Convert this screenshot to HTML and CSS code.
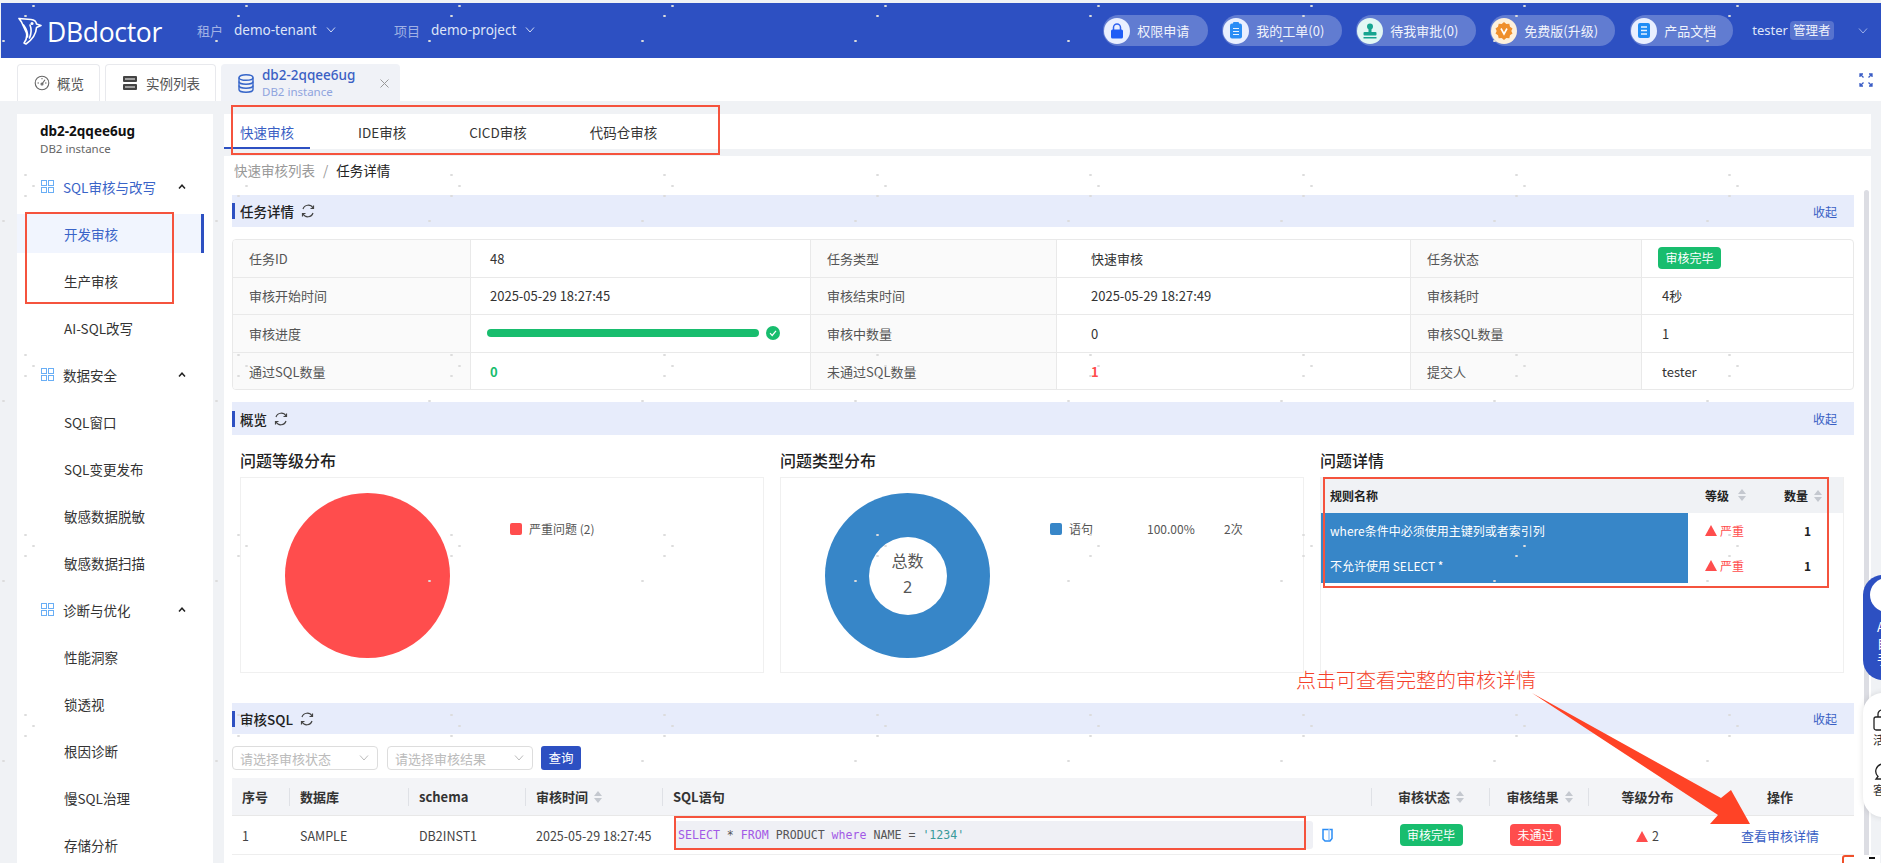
FILE: index.html
```html
<!DOCTYPE html>
<html lang="zh-CN">
<head>
<meta charset="utf-8">
<title>DBdoctor</title>
<link rel="stylesheet" href="styles.css">
</head>
<body>
<header class="topbar">
  <div class="logo">
    <svg class="logo-mark" width="24" height="28" viewBox="0 0 24 28" fill="none" stroke="#fff" stroke-width="1.6" stroke-linejoin="round" stroke-linecap="round"><path d="M1 1.5 L13 2.5 Q18 3 18.5 7 L23 8.5 L18.5 10.5 Q18 20 8 27 L6 26 Q9.5 22 8.5 16 L3.5 5 Z"/><path d="M5.5 8 Q10 14 9.5 20"/><path d="M12 8 Q14.5 14 11.5 21"/><circle cx="14" cy="6.5" r=".8"/></svg>
    <span class="logo-text">DBdoctor</span>
  </div>
  <div class="scope scope-tenant"><span class="scope-label">租户</span><span>demo-tenant</span><svg class="chev" width="10" height="6" viewBox="0 0 10 6" fill="none" stroke="#cfd8f5" stroke-width="1"><path d="M1 .5 5 5 9 .5"/></svg></div>
  <div class="scope scope-project"><span class="scope-label">项目</span><span>demo-project</span><svg class="chev" width="10" height="6" viewBox="0 0 10 6" fill="none" stroke="#cfd8f5" stroke-width="1"><path d="M1 .5 5 5 9 .5"/></svg></div>
  <div class="top-actions">
    <div class="pill pill-a"><span class="pill-ic"><svg width="14" height="16" viewBox="0 0 14 16"><path d="M3.5 7V4.5a3.5 3.5 0 0 1 7 0V7" fill="none" stroke="#2f62f0" stroke-width="1.5"/><rect x="1" y="6.5" width="12" height="9" rx="1.5" fill="#1f5cf5"/></svg></span>权限申请</div>
    <div class="pill pill-b"><span class="pill-ic"><svg width="14" height="17" viewBox="0 0 14 17"><rect x="1" y="1.5" width="12" height="15" rx="2" fill="#2b8df5"/><rect x="4" y="0" width="6" height="3" rx="1" fill="#2b8df5"/><path d="M4 6.5h6M4 9.5h6M4 12.5h6" stroke="#e8f2ff" stroke-width="1.2"/></svg></span>我的工单(0)</div>
    <div class="pill pill-c"><span class="pill-ic pill-ic-teal"><svg width="16" height="16" viewBox="0 0 16 16"><circle cx="8" cy="3.5" r="3" fill="#17a590"/><path d="M6.5 5.5h3v4h-3z" fill="#17a590"/><rect x="1.5" y="9" width="13" height="3.5" rx="1" fill="#17a590"/><rect x="1.5" y="14" width="13" height="1.5" fill="#17a590"/></svg></span>待我审批(0)</div>
    <div class="pill pill-d"><span class="pill-ic pill-ic-gold"><svg width="18" height="18" viewBox="0 0 18 18"><path d="M9 0l2.3 2 3-.3.7 3 2.5 1.8L16.3 9l1.2 2.5-2.5 1.8-.7 3-3-.3L9 18l-2.3-2-3 .3-.7-3L.5 11.5 1.7 9 .5 6.5 3 4.700l.7-3 3 .3z" fill="#ef8f2c"/><path d="M6 6.500 9 12l3-5.500" fill="none" stroke="#fff" stroke-width="1.600"/></svg></span>免费版(升级)</div>
    <div class="pill pill-e"><span class="pill-ic"><svg width="14" height="17" viewBox="0 0 14 17"><rect x="1" y="1" width="12" height="15" rx="2" fill="#1f8cf5"/><path d="M4 5h6M4 8.500h6M4 12h6" stroke="#e8f2ff" stroke-width="1.300"/></svg></span>产品文档</div>
    <div class="user"><span>tester</span><span class="role">管理者</span></div>
    <svg class="user-chev" width="10" height="6" viewBox="0 0 10 6" fill="none" stroke="#9db0e8" stroke-width="1"><path d="M1 .5 5 5 9 .5"/></svg>
  </div>
</header>

<nav class="tabbar">
  <div class="wtab wtab-home"><svg width="16" height="16" viewBox="0 0 16 16" fill="none" stroke="#666" stroke-width="1.100"><circle cx="8" cy="8" r="6.800"/><path d="M8 9 11 4.800"/><path d="M3.500 8h1.500M11 8h1.500M8 3v1.300"/><circle cx="8" cy="9" r="1"/></svg>概览</div>
  <div class="wtab wtab-list"><svg width="16" height="16" viewBox="0 0 16 16"><rect x="1" y="1" width="14" height="6" rx="1" fill="#444"/><rect x="1" y="9" width="14" height="6" rx="1" fill="#444"/><path d="M3 4h10M3 12h10" stroke="#fff" stroke-width="1"/></svg>实例列表</div>
  <div class="wtab wtab-active">
    <svg width="16" height="19" viewBox="0 0 16 19" fill="none" stroke="#3565c9" stroke-width="1.400"><ellipse cx="8" cy="3.500" rx="7" ry="2.800"/><path d="M1 3.500v12c0 1.500 3 2.800 7 2.800s7-1.300 7-2.800v-12"/><path d="M1 7.500c0 1.500 3 2.800 7 2.800s7-1.300 7-2.800M1 11.500c0 1.500 3 2.800 7 2.800s7-1.300 7-2.800"/></svg>
    <div class="wtab-txt"><div class="wtab-title">db2-2qqee6ug</div><div class="wtab-sub">DB2 instance</div></div>
    <svg class="wtab-x" width="9" height="9" viewBox="0 0 9 9" stroke="#999" stroke-width="1"><path d="M.5.500l8 8M8.500.500l-8 8"/></svg>
  </div>
  <svg class="fullscreen" width="14" height="14" viewBox="0 0 14 14" fill="none" stroke="#3a5cc5" stroke-width="1.300"><path d="M1 4V1h3M1 1l3.500 3.500M13 4V1h-3M13 1 9.500 4.500M1 10v3h3M1 13l3.500-3.500M13 10v3h-3M13 13 9.500 9.500"/></svg>
</nav>

<main class="main">
  <aside class="sidebar">
    <div class="side-head"><div class="side-name">db2-2qqee6ug</div><div class="side-sub">DB2 instance</div></div>
    <div class="side-list">
      <div class="side-group side-group-active"><svg class="gi" width="13" height="13" viewBox="0 0 13 13" fill="none" stroke="#69aef5"><rect x=".5" y=".5" width="5" height="5"/><rect x="7.500" y=".5" width="5" height="5"/><rect x=".5" y="7.500" width="5" height="5"/><rect x="7.500" y="7.500" width="5" height="5"/></svg><span>SQL审核与改写</span><svg class="up" width="8" height="5" viewBox="0 0 8 5" fill="none" stroke="#222" stroke-width="1.500"><path d="M1 4.500 4 1.200l3 3.300"/></svg></div>
      <div class="side-item side-item-active">开发审核</div>
      <div class="side-item">生产审核</div>
      <div class="side-item">AI-SQL改写</div>
      <div class="side-group"><svg class="gi" width="13" height="13" viewBox="0 0 13 13" fill="none" stroke="#69aef5"><rect x=".5" y=".5" width="5" height="5"/><rect x="7.500" y=".5" width="5" height="5"/><rect x=".5" y="7.500" width="5" height="5"/><rect x="7.500" y="7.500" width="5" height="5"/></svg><span>数据安全</span><svg class="up" width="8" height="5" viewBox="0 0 8 5" fill="none" stroke="#222" stroke-width="1.500"><path d="M1 4.500 4 1.200l3 3.300"/></svg></div>
      <div class="side-item">SQL窗口</div>
      <div class="side-item">SQL变更发布</div>
      <div class="side-item">敏感数据脱敏</div>
      <div class="side-item">敏感数据扫描</div>
      <div class="side-group"><svg class="gi" width="13" height="13" viewBox="0 0 13 13" fill="none" stroke="#69aef5"><rect x=".5" y=".5" width="5" height="5"/><rect x="7.500" y=".5" width="5" height="5"/><rect x=".5" y="7.500" width="5" height="5"/><rect x="7.500" y="7.500" width="5" height="5"/></svg><span>诊断与优化</span><svg class="up" width="8" height="5" viewBox="0 0 8 5" fill="none" stroke="#222" stroke-width="1.500"><path d="M1 4.500 4 1.200l3 3.300"/></svg></div>
      <div class="side-item">性能洞察</div>
      <div class="side-item">锁透视</div>
      <div class="side-item">根因诊断</div>
      <div class="side-item">慢SQL治理</div>
      <div class="side-item">存储分析</div>
    </div>
  </aside>

  <div class="content">
    <div class="ctabs">
      <div class="ctab ctab-active">快速审核</div>
      <div class="ctab">IDE审核</div>
      <div class="ctab">CICD审核</div>
      <div class="ctab">代码仓审核</div>
    </div>
    <section class="panel">
      <div class="crumbs"><span class="crumb-dim">快速审核列表</span><span class="crumb-sep">/</span><span>任务详情</span></div>

      <div class="bar"><span class="bar-title">任务详情</span><svg class="refresh" width="14" height="14" viewBox="0 0 14 14" fill="none" stroke="#444" stroke-width="1.200"><path d="M2 5a5.500 5.500 0 0 1 10-1M12 9a5.500 5.500 0 0 1-10 1"/><path d="M12.500 1.500V4.500H9.500M1.500 12.500V9.500H4.500"/></svg><span class="bar-link">收起</span></div>

      <div class="desc">
        <div class="dl">任务ID</div><div class="dv">48</div><div class="dl">任务类型</div><div class="dv">快速审核</div><div class="dl">任务状态</div><div class="dv"><span class="tag tag-green tag-status">审核完毕</span></div>
        <div class="dl">审核开始时间</div><div class="dv">2025-05-29 18:27:45</div><div class="dl">审核结束时间</div><div class="dv">2025-05-29 18:27:49</div><div class="dl">审核耗时</div><div class="dv">4秒</div>
        <div class="dl">审核进度</div><div class="dv dv-progress"><span class="progress"></span><svg width="14" height="14" viewBox="0 0 14 14"><circle cx="7" cy="7" r="7" fill="#18bd6e"/><path d="M4 7.200 6.200 9.500 10 4.800" fill="none" stroke="#fff" stroke-width="1.200"/></svg></div><div class="dl">审核中数量</div><div class="dv">0</div><div class="dl">审核SQL数量</div><div class="dv">1</div>
        <div class="dl">通过SQL数量</div><div class="dv num-green">0</div><div class="dl">未通过SQL数量</div><div class="dv num-red">1</div><div class="dl">提交人</div><div class="dv">tester</div>
      </div>

      <div class="bar bar-2"><span class="bar-title">概览</span><svg class="refresh" width="14" height="14" viewBox="0 0 14 14" fill="none" stroke="#444" stroke-width="1.200"><path d="M2 5a5.500 5.500 0 0 1 10-1M12 9a5.500 5.500 0 0 1-10 1"/><path d="M12.500 1.500V4.500H9.500M1.500 12.500V9.500H4.500"/></svg><span class="bar-link">收起</span></div>

      <div class="charts">
        <div class="chart-col">
          <h3 class="chart-title">问题等级分布</h3>
          <div class="card card-pie">
            <div class="pie"></div>
            <div class="legend"><i class="sw sw-red"></i><span>严重问题 (2)</span></div>
          </div>
        </div>
        <div class="chart-col">
          <h3 class="chart-title">问题类型分布</h3>
          <div class="card card-donut">
            <div class="donut"><div class="donut-hole"><span class="donut-lbl">总数</span><span class="donut-num">2</span></div></div>
            <div class="legend legend-type"><i class="sw sw-blue"></i><span class="lg-name">语句</span><span class="lg-pct">100.00%</span><span>2次</span></div>
          </div>
        </div>
        <div class="chart-col">
          <h3 class="chart-title">问题详情</h3>
          <div class="card card-rules">
            <div class="rule-row rule-head"><div class="rule-name">规则名称</div><div class="rule-lv">等级<svg class="sort" width="8" height="12" viewBox="0 0 8 12" fill="#c4c8cf"><path d="M4 0 8 5H0zM4 12 0 7h8z"/></svg></div><div>数量<svg class="sort" width="8" height="12" viewBox="0 0 8 12" fill="#c4c8cf"><path d="M4 0 8 5H0zM4 12 0 7h8z"/></svg></div></div>
            <div class="rule-row"><div class="rule-name rule-sel">where条件中必须使用主键列或者索引列</div><div class="rule-lv rule-sev"><svg width="12" height="11" viewBox="0 0 12 11" fill="#ff4d4d"><path d="M6 0 12 11H0z"/></svg>严重</div><div class="rule-qty">1</div></div>
            <div class="rule-row"><div class="rule-name rule-sel">不允许使用 SELECT *</div><div class="rule-lv rule-sev"><svg width="12" height="11" viewBox="0 0 12 11" fill="#ff4d4d"><path d="M6 0 12 11H0z"/></svg>严重</div><div class="rule-qty">1</div></div>
          </div>
        </div>
      </div>

      <div class="bar bar-3"><span class="bar-title">审核SQL</span><svg class="refresh" width="14" height="14" viewBox="0 0 14 14" fill="none" stroke="#444" stroke-width="1.200"><path d="M2 5a5.500 5.500 0 0 1 10-1M12 9a5.500 5.500 0 0 1-10 1"/><path d="M12.500 1.500V4.500H9.500M1.500 12.500V9.500H4.500"/></svg><span class="bar-link">收起</span></div>

      <div class="filters">
        <div class="select">请选择审核状态<svg width="10" height="6" viewBox="0 0 10 6" fill="none" stroke="#bbb"><path d="M1 .5 5 5 9 .5"/></svg></div>
        <div class="select">请选择审核结果<svg width="10" height="6" viewBox="0 0 10 6" fill="none" stroke="#bbb"><path d="M1 .5 5 5 9 .5"/></svg></div>
        <div class="btn">查询</div>
      </div>

      <div class="sql-table">
        <div class="sql-row sql-head">
          <div class="th th-line">序号</div><div class="th th-line">数据库</div><div class="th th-line">schema</div><div class="th th-line">审核时间<svg class="sort" width="8" height="12" viewBox="0 0 8 12" fill="#c4c8cf"><path d="M4 0 8 5H0zM4 12 0 7h8z"/></svg></div><div class="th th-line">SQL语句</div>
          <div class="th th-c th-line">审核状态<svg class="sort" width="8" height="12" viewBox="0 0 8 12" fill="#c4c8cf"><path d="M4 0 8 5H0zM4 12 0 7h8z"/></svg></div><div class="th th-c th-line">审核结果<svg class="sort" width="8" height="12" viewBox="0 0 8 12" fill="#c4c8cf"><path d="M4 0 8 5H0zM4 12 0 7h8z"/></svg></div><div class="th th-c">等级分布</div><div class="th th-c">操作</div>
        </div>
        <div class="sql-row sql-body">
          <div class="td">1</div><div class="td">SAMPLE</div><div class="td">DB2INST1</div><div class="td">2025-05-29 18:27:45</div>
          <div class="td td-code"><code class="code"><b>SELECT</b> * <b>FROM</b> <span class="id">PRODUCT</span> <b>where</b> <span class="id">NAME</span> = <em>'1234'</em></code><svg class="copy" width="11" height="14" viewBox="0 0 11 14" fill="none" stroke="#2b8df5" stroke-width="1.500"><path d="M1 1.500h9v9l-2 2.500H3l-2-2z"/><path d="M7 1v11" stroke="#9cc9fb"/></svg></div>
          <div class="td td-c"><span class="tag tag-green">审核完毕</span></div><div class="td td-c td-res"><span class="tag tag-red">未通过</span></div>
          <div class="td td-c"><svg class="tri" width="12" height="11" viewBox="0 0 12 11" fill="#ff4d4d"><path d="M6 0 12 11H0z"/></svg>2</div>
          <div class="td td-c td-op">查看审核详情</div>
        </div>
      </div>
    </section>
    <span class="scrollbar"></span>
  </div>
</main>

<div class="watermark"></div>

<div class="mark mark-tabs"></div>
<div class="mark mark-side"></div>
<div class="mark mark-rules"></div>
<div class="mark mark-sql"></div>
<div class="note">点击可查看完整的审核详情</div>
<svg class="arrow" width="240" height="150" viewBox="0 0 240 150"><path d="M0 0 189 105 199 97 218 131 178 131 186 122Z" fill="#ff4326"/></svg>

<div class="float-blue"><span class="float-circle"></span><span>A</span><span>自</span><span>手</span></div>
<div class="float-white">
  <svg width="18" height="22" viewBox="0 0 18 22" fill="none" stroke="#222" stroke-width="1.300"><rect x="1" y="8" width="16" height="13" rx="2"/><path d="M5 8V5a4 4 0 0 1 8 0v3"/></svg><span>活</span>
  <svg class="fw-ic2" width="18" height="18" viewBox="0 0 18 18" fill="none" stroke="#222" stroke-width="1.300"><path d="M9 1a8 7.500 0 0 1 0 15H3l2-2.500A8 7.500 0 0 1 9 1Z"/></svg><span>客</span>
</div>
<div class="corner"><svg width="15" height="8" viewBox="0 0 15 8" fill="none" stroke="#f0502a" stroke-width="2"><path d="M1 8V3q0-2 2-2h9"/></svg><span class="corner-dash"></span></div>
</body>
</html>
```
FILE: styles.css
```css
* { box-sizing: border-box; }
html, body { margin: 0; height: 863px; overflow: hidden; }
body {
  position: relative;
  width: 1881px;
  background: #f0f2f5;
  font-family: "Noto Sans CJK SC", "Noto Sans", sans-serif;
  font-size: 13.5px;
  color: #333;
  padding-top: 3px;
  display: flex;
  flex-direction: column;
}

/* header */
.topbar {
  height: 55px;
  margin-left: 1px;
  background: #2d50c2;
  color: #e6ebfa;
  display: flex;
  align-items: center;
  flex: none;
}
.logo { display: flex; align-items: center; width: 196px; padding-left: 17px; }
.logo-mark { flex: none; }
.logo-text {
  font-family: "Open Sans", sans-serif;
  font-size: 26.5px;
  line-height: 30px;
  color: #fff;
  margin: 2px 0 0 5px;
  letter-spacing: -.3px;
}
.scope { display: flex; align-items: center; font-size: 13.5px; color: #dfe5f8; margin-top: -1px; font-family: "Noto Sans", "Noto Sans CJK SC", sans-serif; }
.scope-label { opacity: .65; margin-right: 11px; font-size: 13px; }
.scope .chev { margin-left: 9px; }
.scope-tenant { width: 197px; }
.top-actions { margin-left: auto; display: flex; align-items: center; padding-right: 13px; }
.pill {
  height: 31px;
  border-radius: 16px;
  background: rgba(255,255,255,.25);
  display: flex;
  align-items: center;
  font-size: 13px;
  color: #f0f3fc;
  margin-right: 14px;
  padding-left: 1px;
}
.pill-a { width: 105px; }
.pill-b { width: 120px; }
.pill-c { width: 120px; }
.pill-d { width: 125px; margin-right: 15px; }
.pill-e { width: 103px; margin-right: 19px; }
.pill-ic {
  width: 26px; height: 26px; border-radius: 50%;
  background: #e9efff;
  display: flex; align-items: center; justify-content: center;
  margin-right: 7px;
  flex: none;
}
.pill-ic-teal { background: #e2f7f4; }
.pill-ic-gold { background: #fdf0dc; }
.user { display: flex; align-items: center; font-size: 13px; font-family: "Noto Sans", "Noto Sans CJK SC", sans-serif; color: #dfe5f8; margin-top: -1px; }
.role { background: rgba(255,255,255,.2); border-radius: 4px; height: 19px; line-height: 19px; padding: 0 3px; width: 44px; font-size: 12.5px; margin-left: 2px; color: #eef1fb; white-space: nowrap; overflow: hidden; }
.user-chev { margin-left: 24px; }

/* window tabs */
.tabbar {
  height: 43px;
  flex: none;
  background: #fff;
  padding: 6px 0 0 17px;
  display: flex;
  align-items: flex-end;
  position: relative;
}
.wtab {
  height: 37px;
  border: 1px solid #e8e9ed;
  border-bottom: 0;
  border-radius: 4px 4px 0 0;
  margin-right: 5px;
  display: flex;
  align-items: center;
  color: #555;
}
.wtab svg { flex: none; }
.wtab-home { width: 83px; padding-left: 16px; gap: 7px; }
.wtab-list { width: 111px; padding-left: 16px; gap: 8px; }
.wtab-active { width: 179px; background: #f0f2f7; padding-left: 16px; gap: 8px; border-color: #f0f2f7; }
.wtab-txt { width: 108px; }
.wtab-title { color: #3a5fc4; font-size: 13.5px; line-height: 18px; font-weight: 500; font-family: "Noto Sans", sans-serif; }
.wtab-sub { color: #8fa4de; font-size: 11.5px; line-height: 16px; font-family: "Noto Sans", sans-serif; }
.wtab-x { margin-left: 2px; }
.fullscreen { position: absolute; right: 8px; top: 15px; }

/* layout */
.main {
  flex: 1;
  min-height: 0;
  display: flex;
  padding: 13px 10px 0 17px;
  gap: 11px;
}
.sidebar { width: 196px; background: #fff; flex: none; }
.side-head { height: 53px; padding: 8px 0 0 23px; }
.side-name { font-weight: 700; font-size: 13.5px; color: #111; line-height: 18px; font-family: "Noto Sans", sans-serif; }
.side-sub { font-size: 11.5px; color: #666; line-height: 18px; font-family: "Noto Sans", sans-serif; }
.side-list { display: flex; flex-direction: column; gap: 8px; }
.side-group, .side-item { height: 39px; display: flex; align-items: center; flex: none; }
.side-group { padding-left: 24px; gap: 9px; color: #333; position: relative; }
.side-group-active { color: #3a64c8; }
.side-group .up { position: absolute; left: 161px; top: 17px; }
.side-item { padding-left: 47px; color: #333; width: 187px; }
.side-item-active { background: #f1f5fe; color: #3a64c8; border-right: 3px solid #2d50c2; }

.content { flex: 1; min-width: 0; position: relative; display: flex; flex-direction: column; }
.ctabs { height: 35px; background: #fff; flex: none; display: flex; gap: 31px; }
.ctab { padding: 0 16px; line-height: 37px; height: 35px; color: #333; white-space: nowrap; }
.ctab-active { color: #3a5fc4; border-bottom: 2px solid #2d50c2; width: 86px; margin-right: 1px; }
.panel {
  margin-top: 7px;
  flex: 1;
  min-height: 0;
  background: #fff;
  padding: 0 17px 0 8px;
  overflow: hidden;
}
.crumbs { height: 39px; display: flex; align-items: center; font-size: 13.5px; color: #222; padding: 0 0 12px 2px; }
.crumb-dim { color: #999; }
.crumb-sep { color: #999; margin: 0 8px; }

.bar {
  height: 32px;
  background: #e7ecfb linear-gradient(#2d50c2, #2d50c2) 0 center / 3px 16px no-repeat;
  display: flex;
  align-items: center;
  gap: 7px;
  padding-left: 8px;
  flex: none;
}
.bar-title { font-weight: 500; font-size: 13.5px; color: #222; }
.bar-link { margin-left: auto; margin-right: 17px; font-size: 12px; color: #3a5fc4; }
.bar-2 { margin-top: 12px; height: 33px; }
.bar-3 { margin-top: 30px; height: 31px; }

.desc {
  margin-top: 12px;
  display: grid;
  grid-template-columns: 238px 340px 246px 354px 231px 213px;
  grid-auto-rows: 37.5px;
  border: 1px solid #e9e9e9;
  border-radius: 4px;
  height: 151px;
  overflow: hidden;
}
.dl, .dv { display: flex; align-items: center; border-bottom: 1px solid #e9e9e9; font-size: 13px; }
.dl { background: #fafafa; color: #555; padding-left: 16px; border-right: 1px solid #e9e9e9; }
.dv { padding-left: 19px; color: #333; border-right: 1px solid #e9e9e9; }
.dv:nth-child(6n+4) { padding-left: 34px; }
.dv:nth-child(6n) { border-right: 0; padding-left: 20px; }
.dl:nth-last-child(-n+6), .dv:nth-last-child(-n+6) { border-bottom: 0; }
.dv-progress { padding-left: 16px; gap: 7px; }
.progress { width: 272px; height: 8px; background: #18bd6e; border-radius: 4px; }
.num-green { color: #18bd6e; font-weight: 700; }
.num-red { color: #ff4d4d; font-weight: 700; }
.tag { display: inline-block; height: 22px; line-height: 21px; border-radius: 4px; font-size: 12px; color: #fff; text-align: center; }
.tag-green { background: #18bd6e; width: 63px; }
.tag-red { background: #ff4d4d; width: 51px; }
.tag-status { margin-left: -4px; }

.charts { display: grid; grid-template-columns: repeat(3, 525px); column-gap: 15px; padding-left: 8px; }
.chart-title { margin: 0; height: 42px; line-height: 50px; font-size: 16px; font-weight: 500; color: #222; }
.card { height: 196px; border: 1px solid #f0f0f0; position: relative; width: 524px; }
.card-pie, .card-donut { display: flex; align-items: flex-start; }
.pie { width: 165px; height: 165px; border-radius: 50%; background: #ff4d4d; margin: 15px 0 0 44px; flex: none; }
.legend { display: flex; align-items: center; font-size: 12px; color: #555; margin: 42px 0 0 60px; white-space: nowrap; }
.sw { width: 12px; height: 12px; border-radius: 2px; margin-right: 7px; flex: none; }
.sw-red { background: #ff4d4d; }
.sw-blue { background: #3786c8; }
.donut { width: 165px; height: 165px; border-radius: 50%; background: #3786c8; margin: 15px 0 0 44px; flex: none; display: flex; align-items: center; justify-content: center; }
.donut-hole { width: 78px; height: 78px; border-radius: 50%; background: #fff; display: flex; flex-direction: column; align-items: center; justify-content: center; color: #555; padding-bottom: 3px; }
.donut-lbl { font-size: 16px; line-height: 27px; }
.donut-num { font-size: 16px; line-height: 27px; font-family: "Noto Sans", sans-serif; }
.lg-name { width: 78px; }
.lg-pct { width: 77px; }
.legend-type { margin-left: 60px; }

.card-rules { border-top: 0; }
.rule-row { display: grid; grid-template-columns: 367px 96px 58px; height: 35px; align-items: center; font-size: 12px; }
.rule-head { height: 36px; background: #f0f2f5; font-weight: 700; color: #222; }
.rule-name { padding-left: 9px; height: 100%; display: flex; align-items: center; }
.rule-sel { background: #3786c8; color: #fff; }
.rule-lv { padding-left: 17px; display: flex; align-items: center; gap: 3px; height: 100%; }
.rule-sev { color: #ff4d4d; }
.rule-qty { padding-left: 20px; font-weight: 700; color: #222; }
.sort { margin-left: 6px; vertical-align: -1px; }

.filters { margin-top: 12px; display: flex; gap: 9px; height: 24px; }
.select {
  width: 146px; height: 24px; border: 1px solid #ddd; border-radius: 4px;
  color: #bbb; font-size: 13px; padding: 0 8px 0 7px;
  display: flex; align-items: center; justify-content: space-between;
}
.btn { width: 40px; height: 24px; background: #2d50c2; border-radius: 3px; color: #fff; font-size: 12.5px; text-align: center; line-height: 23px; margin-left: -1px; }

.sql-table { margin-top: 8px; }
.sql-row { display: grid; grid-template-columns: 58px 119px 117px 137px 709px 118px 99px 117px 148px; }
.sql-head { height: 38px; background: #f3f4f7; border-bottom: 1px solid #e8e8e8; align-items: stretch; }
.th { font-weight: 700; font-size: 13px; color: #333; padding-left: 10px; display: flex; align-items: center; white-space: nowrap; }
.th-line { background: linear-gradient(#dfe1e6, #dfe1e6) right center / 1px 18px no-repeat; }
.th-c { justify-content: center; padding-left: 0; }
.sql-body { height: 39px; border-bottom: 1px solid #eee; align-items: center; }
.td { padding-left: 10px; font-size: 12.5px; color: #444; white-space: nowrap; }
.td-c { padding-left: 0; text-align: center; }
.td-res { padding-right: 8px; }
.td-code { display: flex; align-items: center; padding-left: 11px; gap: 9px; }
.code {
  width: 639px; height: 28px; line-height: 28px; background: #eff0f5; border-radius: 3px; padding-left: 4px;
  font-family: "DejaVu Sans Mono", "Liberation Mono", monospace; font-size: 11.6px; color: #555;
}
.code b { color: #a259e6; font-weight: 400; }
.code em { color: #3a9a9a; font-style: normal; }
.code .id { color: #555; }
.tri { margin-right: 4px; vertical-align: -1px; }
.td-op { color: #3a5fc4; font-size: 13px; }

.scrollbar { position: absolute; right: 2px; top: 76px; bottom: 0; width: 5px; background: #dcdde3; border-radius: 3px 3px 0 0; }

/* watermark specks */
.watermark {
  position: absolute; inset: 0; pointer-events: none;
  background-image:
    radial-gradient(circle, #dcdcdc 1px, transparent 1.4px),
    radial-gradient(circle, #dcdcdc 1px, transparent 1.4px),
    radial-gradient(circle, #dcdcdc 1px, transparent 1.4px),
    radial-gradient(circle, #dcdcdc 1px, transparent 1.4px);
  background-size: 213px 180px;
  background-position: 132px 85px, 140px 96px, 132px 106px, 110px 131px;
}

/* annotations */
.mark { position: absolute; border: 2px solid #f5533d; pointer-events: none; }
.mark-tabs { left: 231px; top: 105px; width: 489px; height: 50px; }
.mark-side { left: 25px; top: 212px; width: 149px; height: 92px; }
.mark-rules { left: 1323px; top: 477px; width: 506px; height: 111px; }
.mark-sql { left: 674px; top: 816px; width: 632px; height: 34px; }
.note { position: absolute; left: 1296px; top: 665px; font-size: 20px; line-height: 30px; color: #f5402a; font-weight: 300; white-space: nowrap; }
.arrow { position: absolute; left: 1532px; top: 693px; }

/* floats at the window edge */
.float-blue {
  position: absolute; left: 1863px; top: 575px; width: 40px; height: 105px;
  background: #2d50c2; border-radius: 20px 0 0 20px; color: #fff;
  display: flex; flex-direction: column; align-items: flex-start; padding: 44px 0 0 14px; font-size: 13px; line-height: 16px;
}
.float-circle { position: absolute; left: 7px; top: 3px; width: 34px; height: 34px; border-radius: 50%; background: #fff; }
.float-white {
  position: absolute; left: 1863px; top: 693px; width: 40px; height: 124px;
  background: #fff; border-radius: 20px 0 0 20px; box-shadow: 0 0 6px rgba(0,0,0,.12);
  display: flex; flex-direction: column; align-items: flex-start; padding: 16px 0 0 10px; font-size: 12px; line-height: 18px; color: #333;
}
.fw-ic2 { margin-top: 14px; }
.corner { position: absolute; left: 1836px; top: 855px; width: 44px; height: 8px; background: #fff; display: flex; align-items: flex-start; padding-left: 6px; }
.corner-dash { width: 6px; height: 2px; background: #111; margin: 2px 0 0 12px; }
```
